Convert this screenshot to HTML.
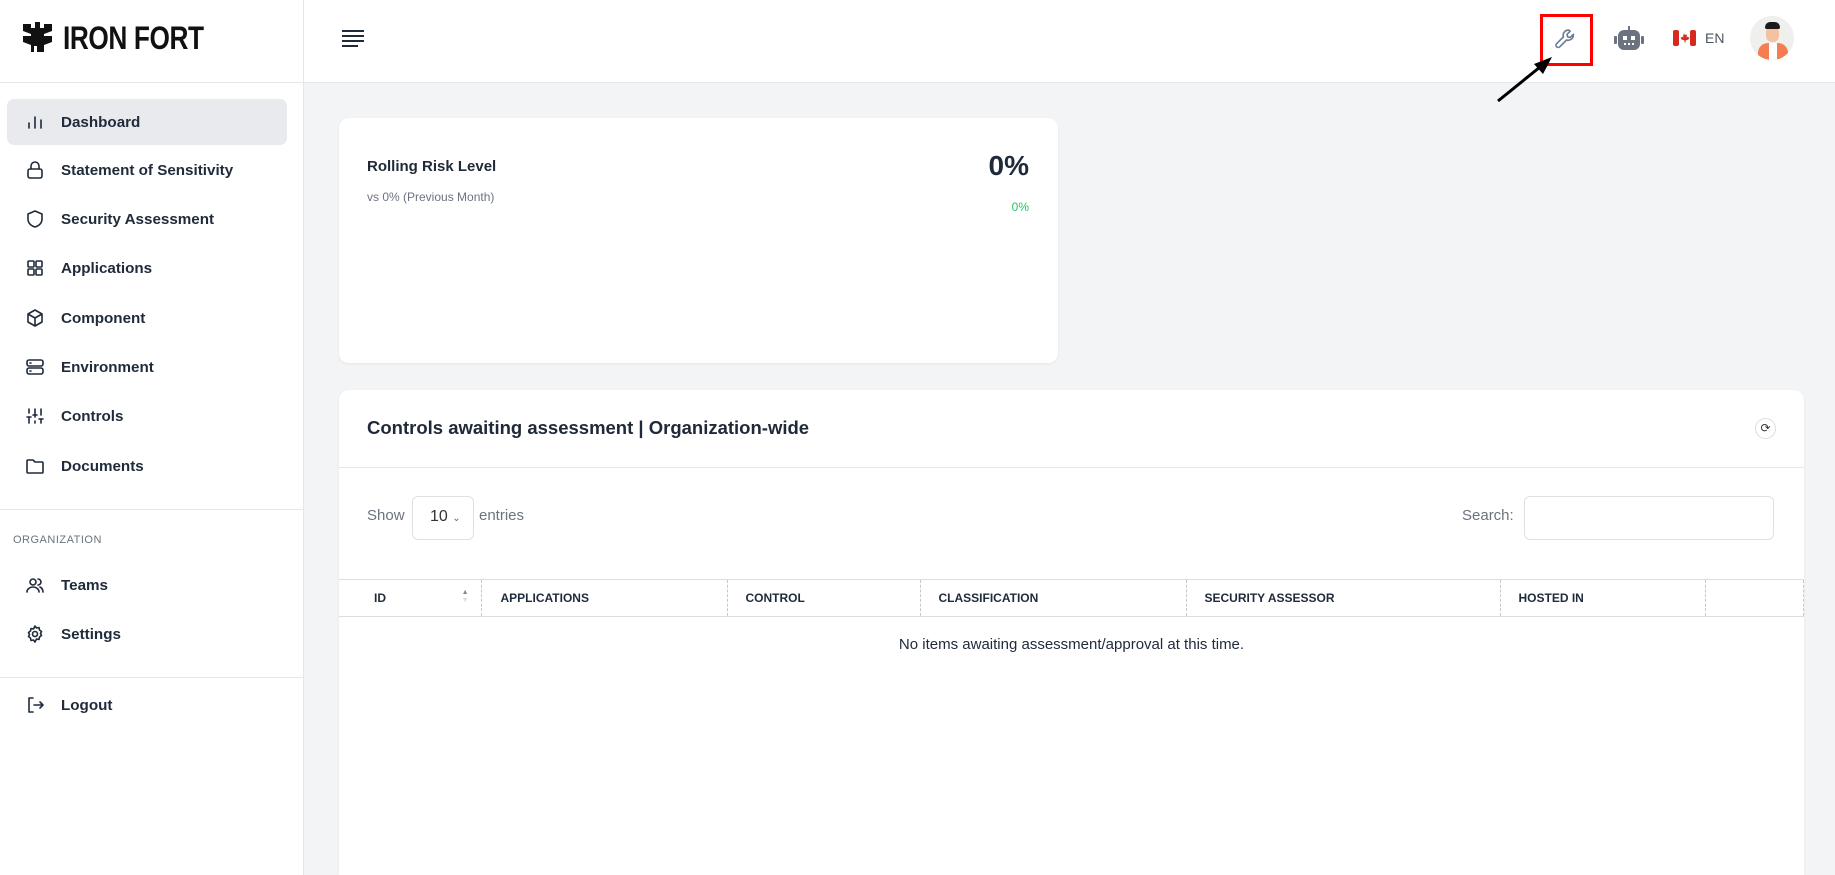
<!DOCTYPE html>
<html><head><meta charset="utf-8"><style>
*{box-sizing:border-box;margin:0;padding:0}
html{width:1835px;height:875px;overflow:hidden}
body{width:1835px;height:875px;overflow:hidden;background:#f3f4f6;font-family:"Liberation Sans",Arial,sans-serif;color:#1f2937;position:relative}
.side{position:absolute;left:0;top:0;width:304px;height:875px;background:#fff;border-right:1px solid #e5e7eb}
.logo{height:83px;border-bottom:1px solid #e5e7eb;position:relative}
.logo .t{position:absolute;left:63px;top:20px;font-size:32px;font-weight:700;letter-spacing:-0.5px;color:#111;transform:scaleX(0.82);transform-origin:left;font-family:"Liberation Sans Narrow","Liberation Sans",sans-serif}
.nav{position:absolute;left:7px;width:280px;height:46px;display:flex;align-items:center;font-size:15.2px;font-weight:700;color:#1f2a3a;border-radius:7px}
.nav svg{position:absolute;left:18px;width:20px;height:20px;fill:none;stroke:#1f2a3a;stroke-width:1.6;stroke-linecap:round;stroke-linejoin:round}
.nav span{position:absolute;left:54px}
.hr{position:absolute;left:0;width:303px;border-top:1px solid #e5e7eb}
.top{position:absolute;left:304px;top:0;right:0;height:83px;background:#fff;border-bottom:1px solid #e5e7eb}
.card{position:absolute;background:#fff;border-radius:10px;box-shadow:0 1px 3px rgba(0,0,0,.06)}
th{font-size:12px;font-weight:700;text-align:left;color:#1f2a3a;border-left:1px dashed #c8c8c8;position:relative;padding-left:18px}
</style></head><body>
<div class="side">
 <div class="logo">
  <svg style="position:absolute;left:23px;top:22px" width="29" height="30" viewBox="0 0 29 30"><path d="M0 2h8v4h4V0h5v6h4V2h8v7l-8 3v2h8v6l-8 3v7h-7l-0-6h-3v6H8v-7L0 20v-6h8v-2L0 9z" fill="#111"/></svg>
  <div class="t">IRON FORT</div>
 </div>
 <div class="nav" style="top:99px;background:#e9eaee"><svg viewBox="0 0 20 20"><path d="M4 16v-5M10 16V5M16 16v-8"/></svg><span>Dashboard</span></div>
 <div class="nav" style="top:147px"><svg viewBox="0 0 20 20"><rect x="3" y="9" width="14" height="9" rx="2"/><path d="M6 9V6a4 4 0 018 0v3"/></svg><span>Statement of Sensitivity</span></div>
 <div class="nav" style="top:196px"><svg viewBox="0 0 20 20"><path d="M10 2l7 3v5c0 4-3 7-7 8-4-1-7-4-7-8V5z"/></svg><span>Security Assessment</span></div>
 <div class="nav" style="top:245px"><svg viewBox="0 0 20 20"><rect x="3" y="3" width="6" height="6" rx="1"/><rect x="11" y="3" width="6" height="6" rx="1"/><rect x="3" y="11" width="6" height="6" rx="1"/><rect x="11" y="11" width="6" height="6" rx="1"/></svg><span>Applications</span></div>
 <div class="nav" style="top:295px"><svg viewBox="0 0 20 20"><path d="M10 2l7 4v8l-7 4-7-4V6zM3 6l7 4 7-4M10 10v8"/></svg><span>Component</span></div>
 <div class="nav" style="top:344px"><svg viewBox="0 0 20 20"><rect x="2" y="3" width="16" height="6" rx="2"/><rect x="2" y="11" width="16" height="6" rx="2"/><path d="M5 6h1M5 14h1"/></svg><span>Environment</span></div>
 <div class="nav" style="top:393px"><svg viewBox="0 0 20 20"><path d="M4 3v4M4 11v6M2 11h4M10 3v8M10 15v2M8 9h4M16 3v6M16 13v4M14 13h4"/></svg><span>Controls</span></div>
 <div class="nav" style="top:443px"><svg viewBox="0 0 20 20"><path d="M2 5a1 1 0 011-1h5l2 2h7a1 1 0 011 1v9a1 1 0 01-1 1H3a1 1 0 01-1-1z"/></svg><span>Documents</span></div>
 <div class="hr" style="top:509px"></div>
 <div style="position:absolute;left:13px;top:534px;font-size:11px;color:#6b7280;letter-spacing:.5px">ORGANIZATION</div>
 <div class="nav" style="top:562px"><svg viewBox="0 0 20 20"><circle cx="8" cy="7" r="3"/><path d="M2 17c0-3 3-5 6-5s6 2 6 5M13 4a3 3 0 010 6M15 12c2 1 3 3 3 5"/></svg><span>Teams</span></div>
 <div class="nav" style="top:611px"><svg viewBox="0 0 20 20"><circle cx="10" cy="10" r="2.5"/><path d="M10 2l1.5 2 2.5-.5.5 2.5 2 1.5-1 2 1 2-2 1.5-.5 2.5-2.5-.5L10 18l-1.5-2-2.5.5-.5-2.5-2-1.5 1-2-1-2 2-1.5.5-2.5 2.5.5z"/></svg><span>Settings</span></div>
 <div class="hr" style="top:677px"></div>
 <div class="nav" style="top:682px"><svg viewBox="0 0 20 20"><path d="M8 3H4v14h4M9 10h9M15 7l3 3-3 3"/></svg><span>Logout</span></div>
</div>
<div class="top">
 <svg style="position:absolute;left:37px;top:29px" width="24" height="18" viewBox="0 0 24 18"><path d="M1 2h22M1 7h22M1 12h22M1 17h16" stroke="#1f2a3a" stroke-width="2"/></svg>
 <div style="position:absolute;left:1236px;top:14px;width:53px;height:52px;border:3px solid #f00"></div>
 <svg style="position:absolute;left:1249px;top:27px" width="25" height="25" viewBox="0 0 24 24" fill="none" stroke="#6b7f95" stroke-width="1.6" stroke-linecap="round" stroke-linejoin="round"><path d="M15 3a5 5 0 00-5 6.5L3.5 16a2 2 0 003 3L13 12.5A5 5 0 0019.5 7l-3 3-2.5-.5-.5-2.5 3-3A5 5 0 0015 3z"/></svg>
 <svg style="position:absolute;left:1309px;top:26px" width="32" height="26" viewBox="0 0 32 26"><rect x="5" y="4" width="22" height="20" rx="6" fill="#6b7280"/><rect x="1" y="10" width="3" height="8" rx="1" fill="#6b7280"/><rect x="28" y="10" width="3" height="8" rx="1" fill="#6b7280"/><rect x="15" y="0" width="2" height="5" fill="#6b7280"/><rect x="10" y="10" width="4" height="4" fill="#fff"/><rect x="18" y="10" width="4" height="4" fill="#fff"/><path d="M11 18h2M15 18h2M19 18h2" stroke="#fff" stroke-width="2"/></svg>
 <svg style="position:absolute;left:1369px;top:30px" width="23" height="16" viewBox="0 0 23 16"><rect width="23" height="16" rx="2" fill="#fff"/><rect width="6" height="16" rx="2" fill="#d52b1e"/><rect x="17" width="6" height="16" rx="2" fill="#d52b1e"/><path d="M11.5 3l1 2 1.5-.5-.5 3 1.5-1 .5 1 1-.3-1 2.3-3 1v2h-1v-2l-3-1-1-2.3 1 .3.5-1 1.5 1-.5-3 1.5.5z" fill="#d52b1e"/></svg>
 <div style="position:absolute;left:1401px;top:30px;font-size:14px;color:#4b5563">EN</div>
 <div style="position:absolute;left:1446px;top:16px;width:44px;height:44px;border-radius:50%;background:#efefee;overflow:hidden">
  <div style="position:absolute;left:8px;top:27px;width:30px;height:20px;background:#f47e52;border-radius:10px 10px 0 0"></div>
  <div style="position:absolute;left:19px;top:27px;width:8px;height:20px;background:#fff"></div>
  <div style="position:absolute;left:16px;top:10px;width:13px;height:16px;background:#f4c2a0;border-radius:6px"></div>
  <div style="position:absolute;left:15px;top:6px;width:15px;height:7px;background:#1a1a1a;border-radius:6px 6px 2px 2px"></div>
 </div>
</div>
<svg style="position:absolute;left:1490px;top:50px" width="70" height="60" viewBox="0 0 70 60"><path d="M8 51L55 13" stroke="#000" stroke-width="3"/><path d="M62 7L44 14l9 10z" fill="#000"/></svg>

<div class="card" style="left:339px;top:118px;width:719px;height:245px">
 <div style="position:absolute;left:28px;top:40px;font-size:15px;font-weight:700">Rolling Risk Level</div>
 <div style="position:absolute;left:28px;top:72px;font-size:12px;color:#6b7280">vs 0% (Previous Month)</div>
 <div style="position:absolute;right:29px;top:32px;font-size:28px;font-weight:700;color:#1f2a3a">0%</div>
 <div style="position:absolute;right:29px;top:82px;font-size:12px;color:#22c55e">0%</div>
</div>
<div class="card" style="left:339px;top:390px;width:1465px;height:485px;border-radius:10px 10px 0 0">
 <div style="position:absolute;left:28px;top:27px;font-size:18.5px;font-weight:700">Controls awaiting assessment | Organization-wide</div>
 <div style="position:absolute;left:1416px;top:28px;width:21px;height:21px;border:1px solid #ddd;border-radius:50%;font-size:12px;text-align:center;line-height:19px;color:#333">⟳</div>
 <div style="position:absolute;left:0;right:0;top:77px;border-top:1px solid #e5e7eb"></div>
 <div style="position:absolute;left:28px;top:117px;font-size:15px;color:#6b7280">Show</div>
 <div style="position:absolute;left:73px;top:106px;width:62px;height:44px;border:1px solid #e0e0e0;border-radius:6px;font-size:16px;color:#333;padding:11px 0 0 17px">10 <span style="font-size:10px;color:#666">⌄</span></div>
 <div style="position:absolute;left:140px;top:117px;font-size:15px;color:#6b7280">entries</div>
 <div style="position:absolute;left:1123px;top:117px;font-size:15px;color:#6b7280">Search:</div>
 <div style="position:absolute;left:1185px;top:106px;width:250px;height:44px;border:1px solid #e0e0e0;border-radius:6px"></div>
 <table style="position:absolute;left:0;top:189px;width:1465px;border-collapse:collapse;border-top:1px solid #ddd;border-bottom:1px solid #ddd;height:38px">
  <tr>
   <th style="width:142px;border-left:none;padding-left:35px">ID<span style="position:absolute;right:12px;top:9px;font-size:7px;color:#888;line-height:8px">▲<br><span style="color:#ddd">▼</span></span></th>
   <th style="width:246px;padding-left:19px">APPLICATIONS</th>
   <th style="width:193px">CONTROL</th>
   <th style="width:266px">CLASSIFICATION</th>
   <th style="width:314px">SECURITY ASSESSOR</th>
   <th style="width:205px">HOSTED IN</th>
   <th style="border-right:1px dashed #c8c8c8"></th>
  </tr>
 </table>
 <div style="position:absolute;left:0;width:1465px;top:246px;text-align:center;font-size:15px;color:#1f2a3a">No items awaiting assessment/approval at this time.</div>
</div>
</body></html>
